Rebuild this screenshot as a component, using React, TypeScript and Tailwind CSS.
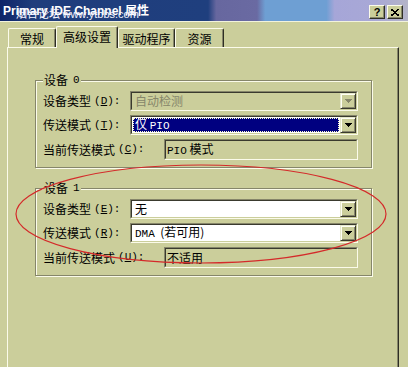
import React from 'react';

const CJK = "font-['Noto_Sans_CJK_SC',sans-serif]";
const MONO = "font-['Liberation_Mono','Noto_Sans_CJK_SC',monospace] text-[11px]";

const Latin = ({ children }: { children: React.ReactNode }) => (
  <span className={MONO}>{children}</span>
);

const Sunken = ({ className, children }: { className: string; children: React.ReactNode }) => (
  <div className={`border border-t-[#86866a] border-l-[#86866a] border-b-[#fbfbea] border-r-[#fbfbea] ${className}`}>
    <div className="h-full border border-t-[#3a3a2e] border-l-[#3a3a2e] border-b-[#cbce9b] border-r-[#cbce9b] flex items-stretch">
      {children}
    </div>
  </div>
);

const ArrowBtn = ({ disabled }: { disabled?: boolean }) => (
  <div className="w-[16px] shrink-0 bg-[#cbce9b] border border-t-[#e6e8cc] border-l-[#e6e8cc] border-b-[#3a3a2e] border-r-[#3a3a2e] shadow-[inset_1px_1px_0_#fffff4,inset_-1px_-1px_0_#86866a] flex items-center justify-center">
    <svg width="7" height="4" shapeRendering="crispEdges">
      <polygon points="0,0 7,0 3.5,4" fill={disabled ? '#86866a' : '#000'} />
    </svg>
  </div>
);

type ComboState = 'disabled' | 'selected' | 'normal';

const Combo = ({ value, state }: { value: React.ReactNode; state: ComboState }) => {
  let body;
  if (state === 'selected') {
    body = (
      <div className="flex-1 bg-white p-[1px] flex">
        <div className="flex-1 bg-[#000080] border border-dotted border-[#ffffc8] text-white flex items-center pl-[1px] leading-none">
          <span className="whitespace-pre">{value}</span>
        </div>
      </div>
    );
  } else {
    body = (
      <div
        className={`flex-1 flex items-center pl-[3px] leading-none ${
          state === 'disabled' ? 'bg-[#cbce9b] text-[#86866a]' : 'bg-white text-black'
        }`}
      >
        <span className="whitespace-pre">{value}</span>
      </div>
    );
  }
  return (
    <Sunken className="w-[228px] h-[20px]">
      {body}
      <ArrowBtn disabled={state === 'disabled'} />
    </Sunken>
  );
};

const ReadOnly = ({ value }: { value: React.ReactNode }) => (
  <Sunken className="w-[194px] h-[21px]">
    <div className="flex-1 flex items-center pl-[1px] leading-none">
      <span className="whitespace-pre">{value}</span>
    </div>
  </Sunken>
);

const Label = ({ cn, k, width }: { cn: string; k: string; width: string }) => (
  <div className={`${width} shrink-0 flex items-center leading-none`}>
    {cn}
    <span className={`${MONO} ml-[3px]`}>
      (<span className="underline">{k}</span>):
    </span>
  </div>
);

interface Device {
  title: string;
  type: { key: string; value: React.ReactNode; state: ComboState };
  mode: { key: string; value: React.ReactNode; state: ComboState };
  current: { key: string; value: React.ReactNode };
}

const devices: Device[] = [
  {
    title: '0',
    type: { key: 'D', value: '自动检测', state: 'disabled' },
    mode: { key: 'T', value: <>仅 <Latin>PIO</Latin></>, state: 'selected' },
    current: { key: 'C', value: <><Latin>PIO</Latin> 模式</> },
  },
  {
    title: '1',
    type: { key: 'E', value: '无', state: 'normal' },
    mode: { key: 'R', value: <><Latin>DMA</Latin>  (若可用)</>, state: 'normal' },
    current: { key: 'U', value: '不适用' },
  },
];

const GroupBox = ({ d, first }: { d: Device; first?: boolean }) => (
  <div
    className={`w-[337px] border border-[#86866a] shadow-[1px_1px_0_#fbfbea,inset_1px_1px_0_#fbfbea] pl-[7px] pb-[7px] ${
      first ? 'mt-[32px]' : 'mt-[20px]'
    }`}
  >
    <div className="-mt-[8px] h-[14px] w-fit px-[1px] bg-[#cbce9b] flex items-center leading-none">
      设备<span className={`${MONO} ml-[5px]`}>{d.title}</span>
    </div>
    <div className="mt-[4px] flex flex-col gap-[4px]">
      <div className="flex items-center">
        <Label cn="设备类型" k={d.type.key} width="w-[87px]" />
        <Combo value={d.type.value} state={d.type.state} />
      </div>
      <div className="flex items-center">
        <Label cn="传送模式" k={d.mode.key} width="w-[87px]" />
        <Combo value={d.mode.value} state={d.mode.state} />
      </div>
      <div className="flex items-center">
        <Label cn="当前传送模式" k={d.current.key} width="w-[121px]" />
        <ReadOnly value={d.current.value} />
      </div>
    </div>
  </div>
);

const tabs = [
  { label: '常规', w: 'w-[48px]' },
  { label: '高级设置', w: 'w-[62px]', active: true },
  { label: '驱动程序', w: 'w-[57px]' },
  { label: '资源', w: 'w-[49px]' },
];

const TitleBtn = ({ children }: { children: React.ReactNode }) => (
  <div className="w-[16px] h-[14px] bg-[#cbce9b] border border-t-[#fbfbea] border-l-[#fbfbea] border-b-[#2e2e24] border-r-[#2e2e24] shadow-[inset_-1px_-1px_0_#86866a] flex items-center justify-center font-['Liberation_Sans',sans-serif] font-bold text-[11px] leading-none text-black">
    {children}
  </div>
);

export default function App() {
  return (
    <div className={`relative w-[408px] h-[367px] overflow-hidden bg-[#cbce9b] flex flex-col text-[12px] text-black ${CJK}`}>
      {/* title bar */}
      <div className="relative h-[21px] shrink-0 flex items-start bg-[linear-gradient(to_right,#0e2468_0%,#1f3d7c_8%,#1f3f7e_51%,#67679f_53%,#6a6aa2_63%,#6e9fd3_65%,#6e9fd3_80%,#a6a6d8_82%,#a8a8d6_92%,#b4b4c8_100%)]">
        <div className="self-center pl-[3px] font-['Liberation_Sans','Noto_Sans_CJK_SC',sans-serif] font-bold text-[12px] text-white leading-none whitespace-nowrap">
          Primary IDE Channel 属性
        </div>
        <div className="absolute left-[16px] top-[8px] text-[11px] leading-none text-[#f4f4ff] whitespace-nowrap">
          烟台论坛 <span className="font-['Liberation_Sans',sans-serif]">www.ytbbs.com</span>
        </div>
        <div className="ml-auto mr-[5px] mt-[5px] flex gap-[2px]">
          <TitleBtn>?</TitleBtn>
          <TitleBtn>
            <svg width="8" height="7" shapeRendering="crispEdges">
              <path d="M0 0L8 7M8 0L0 7" stroke="#000" strokeWidth="1.6" />
            </svg>
          </TitleBtn>
        </div>
      </div>
      <div className="h-px shrink-0 bg-[#f2f3dc]" />

      {/* tabs */}
      <div className="mt-[4px] h-[21px] shrink-0 flex items-end pl-[8px]">
        {tabs.map((t) =>
          t.active ? (
            <div
              key={t.label}
              className={`${t.w} relative z-10 h-[22px] -mb-px bg-[#cbce9b] border-t border-l border-t-[#fbfbea] border-l-[#fbfbea] border-r border-r-[#2e2e24] shadow-[inset_-1px_0_0_#86866a] rounded-t-[2px] flex items-center justify-center leading-none pb-[2px]`}
            >
              {t.label}
            </div>
          ) : (
            <div
              key={t.label}
              className={`${t.w} h-[19px] border-t border-l border-t-[#fbfbea] border-l-[#fbfbea] border-r border-r-[#2e2e24] shadow-[inset_-1px_0_0_#86866a] rounded-t-[2px] flex items-center justify-center leading-none pt-[1px]`}
            >
              {t.label}
            </div>
          ),
        )}
      </div>

      {/* panel */}
      <div className="flex-1 ml-[7px] w-[392px] border-t border-l border-t-[#fbfbea] border-l-[#fbfbea] border-r border-r-[#2e2e24] shadow-[inset_-1px_0_0_#86866a] pl-[27px]">
        {devices.map((d, i) => (
          <GroupBox key={d.title} d={d} first={i === 0} />
        ))}
      </div>

      {/* hand-drawn red annotation */}
      <svg className="absolute left-0 top-0 pointer-events-none" width="408" height="367">
        <ellipse cx="201" cy="214" rx="185" ry="49" fill="none" stroke="#d42a2a" strokeWidth="1.2" />
      </svg>
    </div>
  );
}
